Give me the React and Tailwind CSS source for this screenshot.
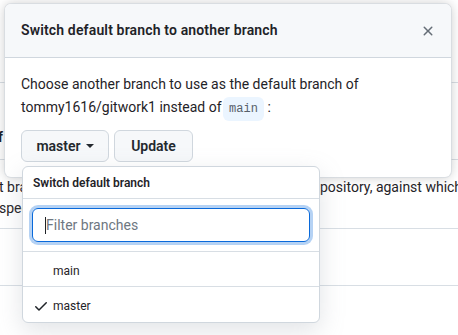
import React from "react";

function XIcon() {
  return (
    <svg width="16" height="16" viewBox="0 0 16 16" fill="#656d76" aria-hidden="true">
      <path d="M3.72 3.72a.75.75 0 0 1 1.06 0L8 6.94l3.22-3.22a.749.749 0 0 1 1.275.326.749.749 0 0 1-.215.734L9.06 8l3.22 3.22a.749.749 0 0 1-.326 1.275.749.749 0 0 1-.734-.215L8 9.06l-3.22 3.22a.751.751 0 0 1-1.042-.018.751.751 0 0 1-.018-1.042L6.94 8 3.72 4.78a.75.75 0 0 1 0-1.06Z" />
    </svg>
  );
}

function CheckIcon() {
  return (
    <svg width="16" height="16" viewBox="0 0 16 16" fill="#1f2328" aria-hidden="true">
      <path d="M13.78 4.22a.75.75 0 0 1 0 1.06l-7.25 7.25a.75.75 0 0 1-1.06 0L2.22 9.28a.751.751 0 0 1 .018-1.042.751.751 0 0 1 1.042-.018L6 10.94l6.72-6.72a.75.75 0 0 1 1.06 0Z" />
    </svg>
  );
}

export default function App() {
  return (
    <div className="relative w-[458px] h-[335px] overflow-hidden bg-white text-[#1f2328] font-['Roboto',sans-serif]">
      {/* page behind */}
      <div className="flex flex-col">
        <div className="h-[82px]" />
        <div className="h-[77px] border-t border-[#d8dee4] flex items-center">
          <span className="text-[14px] font-semibold leading-[21px] whitespace-nowrap -ml-[2px] mt-[32px]">f</span>
        </div>
        <div className="h-[69px] border-t border-[#d8dee4] pt-[17px] text-[14px] leading-[21px] whitespace-nowrap">
          <div className="flex">
            <span className="block shrink-0 w-[321px] overflow-hidden -ml-[1px]">t branch is considered the “base” branch in your re</span>
            <span className="shrink-0">pository, against which all pull requests</span>
          </div>
          <div className="-ml-[1px]">specify a different branch.</div>
        </div>
        <div className="h-[57px] border-t border-[#d8dee4]" />
        <div className="h-[50px] border-t border-[#d8dee4]" />
      </div>

      {/* modal */}
      <div className="absolute left-[5px] top-[4px] w-[446px] rounded-[6px] bg-white shadow-[0_0_0_1px_rgba(208,215,222,0.6),0_0_12px_rgba(0,0,0,0.22)]">
        <div className="h-[54px] flex items-center justify-between pl-[16px] pr-[16px] bg-[#f6f8fa] border-b border-[#d0d7de] rounded-t-[6px]">
          <h1 className="text-[14px] font-semibold tracking-[0.15px]">Switch default branch to another branch</h1>
          <button className="w-[16px] h-[16px] flex items-center justify-center mr-[-1px]">
            <XIcon />
          </button>
        </div>
        <div className="px-[16px] pt-[15px] pb-[15px]">
          <p className="text-[14px] leading-[22px]">
            Choose another branch to use as the default branch of
            <br />
            tommy1616/gitwork1 instead of{" "}
            <code className="inline-block px-[6px] h-[24px] leading-[24px] rounded-[6px] bg-[#ebf5ff] text-[#57606a] text-[12px] font-['Liberation_Mono',monospace] align-middle -ml-[2px] mt-[2px]">
              main
            </code>{" "}
            :
          </p>
          <div className="relative mt-[9px] flex gap-[5px]">
            <button className="h-[32px] w-[88px] flex items-center justify-center gap-[4px] rounded-[6px] border border-[#d0d7de] bg-[#f6f8fa] text-[14px] font-semibold text-[#24292f]">
              master
              <span className="w-0 h-0 border-x-[4px] border-x-transparent border-t-[4px] border-t-[#24292f] ml-[1px]" />
            </button>
            <button className="h-[32px] w-[79px] rounded-[6px] border border-[#d0d7de] bg-[#f6f8fa] text-[14px] font-semibold text-[#24292f]">
              Update
            </button>

            {/* dropdown */}
            <div className="absolute left-[1px] top-[36px] w-[298px] rounded-[6px] border border-[#d0d7de] bg-white shadow-[0_8px_24px_rgba(140,149,159,0.25)] z-10">
              <div className="h-[32px] flex items-center px-[10px] border-b border-[#d8dee4] text-[12px] font-semibold">
                Switch default branch
              </div>
              <div className="px-[9px] py-[9px] border-b border-[#d8dee4]">
                <div className="h-[34px] rounded-[6px] border border-[#0969da] shadow-[0_0_0_3px_rgba(9,105,218,0.3)] flex items-center pl-[12px]">
                  <span className="w-px h-[17px] bg-[#1f2328]" />
                  <span className="text-[14px] text-[#6e7781]">Filter branches</span>
                </div>
              </div>
              <div className="h-[35px] flex items-center pl-[30px] pt-[3px] border-b border-[#d8dee4] text-[12px]">
                main
              </div>
              <div className="h-[35px] flex items-center pl-[10px] pt-[3px] text-[12px] gap-[4px]">
                <CheckIcon />
                master
              </div>
            </div>
          </div>
        </div>
      </div>
    </div>
  );
}
